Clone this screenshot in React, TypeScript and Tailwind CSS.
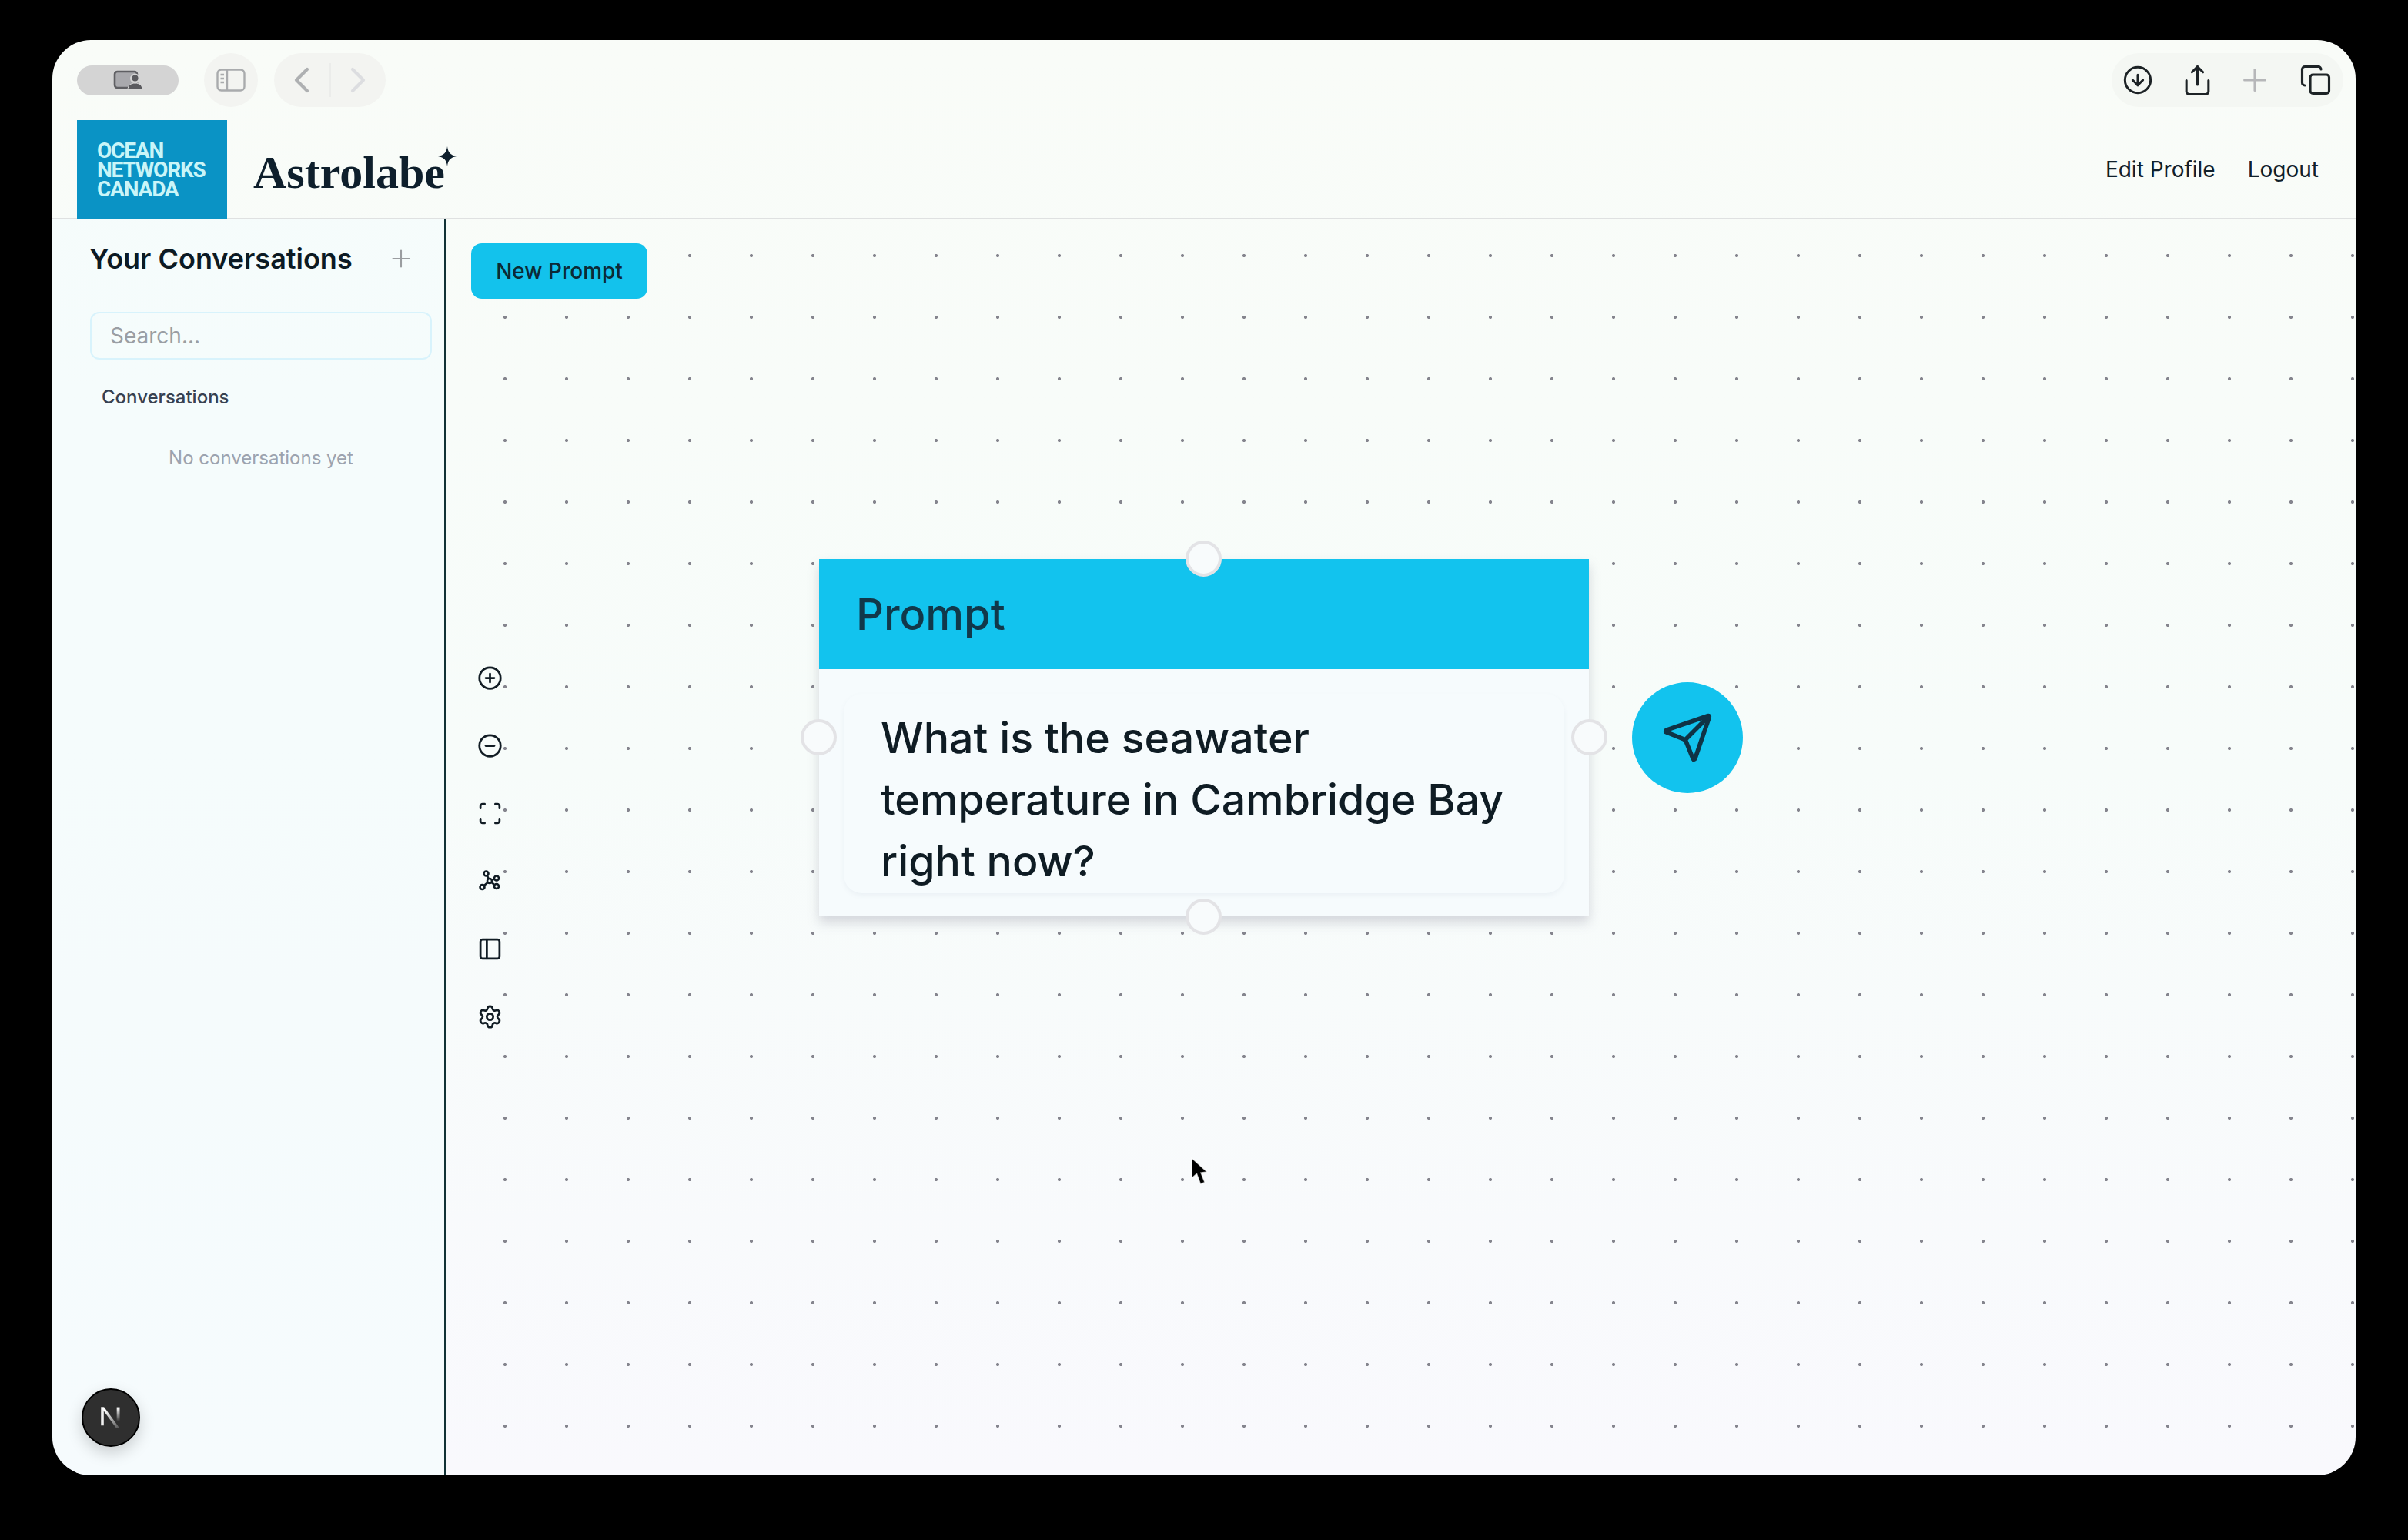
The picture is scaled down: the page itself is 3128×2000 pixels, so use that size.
import { CirclePlus, CircleMinus, Scan, PanelLeft, Settings, Send, Plus, ChevronLeft, ChevronRight, Share, Copy, CircleArrowDown } from "lucide-react";

function NetworkIcon() {
  return (
    <svg width="32" height="32" viewBox="0 0 32 32" fill="none" stroke="#111c24" strokeWidth="2.6">
      <circle cx="16" cy="16" r="3" />
      <circle cx="11.5" cy="6.5" r="3" />
      <circle cx="25" cy="12.5" r="3" />
      <circle cx="25" cy="23" r="3" />
      <circle cx="6.5" cy="24" r="3" />
      <path d="M13 9.2L14.6 13.4M22.2 13.4L18.9 15M22.6 21.4L18.5 17.8M8.8 22L13.7 18" />
    </svg>
  );
}

function ProfileTabIcon() {
  return (
    <svg width="38" height="26" viewBox="0 0 38 26" fill="none">
      <rect x="2" y="2" width="29" height="21" rx="3.5" fill="#a9a9ad" stroke="#5f5f63" strokeWidth="2.6" />
      <circle cx="28.500" cy="11" r="6.500" fill="#d4d4d4" />
      <circle cx="28.500" cy="10.500" r="4" fill="#5b5b5f" />
      <path d="M19 25.500c0-5.500 4-8.500 9.500-8.500s9.500 3 9.500 8.500z" fill="#5b5b5f" stroke="#d4d4d4" strokeWidth="1" />
    </svg>
  );
}

function SidebarIcon() {
  return (
    <svg width="38" height="30" viewBox="0 0 38 30" fill="none" stroke="#a9abad" strokeWidth="2.4">
      <rect x="1.5" y="1.5" width="35" height="27" rx="5" />
      <path d="M14 1.5v27" />
      <path d="M5.5 8h4.500M5.5 13h4.500M5.5 18h4.500" />
    </svg>
  );
}

function StarIcon() {
  return (
    <svg width="24" height="26" viewBox="0 0 24 26" className="absolute left-[240px] top-[-2px]">
      <path d="M12 0C13 8 16 11.500 24 13 16 14.500 13 18 12 26 11 18 8 14.500 0 13 8 11.500 11 8 12 0z" fill="#0e1f2c" />
    </svg>
  );
}

function NextLogo() {
  return (
    <svg width="46" height="46" viewBox="0 0 36 36" fill="none">
      <defs>
        <linearGradient id="nA" x1="14" y1="10" x2="28" y2="30" gradientUnits="userSpaceOnUse">
          <stop offset="0" stopColor="#ffffff" />
          <stop offset="1" stopColor="#ffffff" stopOpacity="0.1" />
        </linearGradient>
        <linearGradient id="nB" x1="26" y1="8" x2="26" y2="22" gradientUnits="userSpaceOnUse">
          <stop offset="0" stopColor="#ffffff" />
          <stop offset="1" stopColor="#ffffff" stopOpacity="0" />
        </linearGradient>
      </defs>
      <path d="M8 7.500h2.800v18.500H8z" fill="#f0f0f0" />
      <path d="M8 7.500h3.200L27 29h-3.300z" fill="url(#nA)" />
      <rect x="24" y="7.500" width="3" height="14" fill="url(#nB)" />
    </svg>
  );
}

function Cursor() {
  return (
    <svg width="24" height="40" viewBox="0 0 24 40" className="absolute left-[966px] top-[1218px]">
      <path d="M2 1L2 27 8.500 21.500 13.500 35 19 32.500 14 20 22 19z" fill="#000" stroke="#ffffff" strokeOpacity="0.7" strokeWidth="1.500" />
    </svg>
  );
}

function Handle({ className }: { className: string }) {
  return <div className={"absolute h-[47px] w-[47px] rounded-full border-[4px] border-[#e3e3e6] bg-[#f8fbfc] " + className} />;
}

const tools = [
  <CirclePlus key="a" size={33} strokeWidth={2} color="#111c24" />,
  <CircleMinus key="b" size={33} strokeWidth={2} color="#111c24" />,
  <Scan key="c" size={33} strokeWidth={2} color="#111c24" />,
  <NetworkIcon key="d" />,
  <PanelLeft key="e" size={33} strokeWidth={2} color="#111c24" />,
  <Settings key="f" size={33} strokeWidth={2} color="#111c24" />,
];

export default function App() {
  return (
    <div className="h-[2000px] w-[3128px] overflow-hidden bg-black pl-[68px] pt-[52px] font-[Inter,sans-serif]">
      <div className="relative flex h-[1864px] w-[2992px] flex-col overflow-hidden rounded-[50px] bg-gradient-to-b from-[#f9fcf8] via-[#f7fcfa] to-[#f9f9fd]">
        {/* browser toolbar */}
        <div className="flex h-[104px] shrink-0 items-center pl-[32px] pr-[16px]">
          <div className="flex h-[39px] w-[132px] items-center justify-center rounded-full bg-[#d4d4d4]">
            <ProfileTabIcon />
          </div>
          <div className="ml-[33px] flex h-[70px] w-[70px] items-center justify-center rounded-full bg-[#f3f4f1]">
            <SidebarIcon />
          </div>
          <div className="ml-[21px] flex h-[70px] w-[145px] items-center justify-between rounded-full bg-[#f3f4f1] px-[8px]">
            <ChevronLeft size={56} strokeWidth={1.8} color="#aeb0b2" />
            <div className="h-[44px] w-[2px] bg-[#ebecea]" />
            <ChevronRight size={56} strokeWidth={1.8} color="#dcdde0" />
          </div>
          <div className="ml-auto flex h-[70px] w-[301px] items-center rounded-full bg-[#f4f7f3] pl-[14px]">
            <CircleArrowDown size={40} strokeWidth={1.8} color="#1d2326" />
            <Share size={43} strokeWidth={1.7} color="#1d2326" className="ml-[36px]" />
            <Plus size={46} strokeWidth={1.6} color="#b6b7b9" className="ml-[30px]" />
            <Copy size={42} strokeWidth={1.8} color="#1d2326" className="ml-[35px]" />
          </div>
        </div>

        {/* app header */}
        <header className="flex h-[129px] shrink-0 items-stretch border-b-2 border-[#dfe1e1] pl-[32px] pr-[48px]">
          <div className="flex h-[128px] w-[195px] items-center bg-[#0a93c5] pl-[26px] font-['Roboto',sans-serif] text-[28px] font-bold leading-[25px] tracking-[-1.2px] text-[#c9f5f8]">
            <p>OCEAN<br />NETWORKS<br />CANADA</p>
          </div>
          <div className="relative ml-[34px] mt-[8px] self-center font-['Liberation_Serif',serif] text-[60px] font-bold leading-[64px] text-[#0e1f2c]">
            Astrolabe
            <StarIcon />
          </div>
          <nav className="ml-auto flex items-center gap-[42px] text-[28px] text-[#10202b]">
            <span>Edit Profile</span>
            <span>Logout</span>
          </nav>
        </header>

        <div className="flex min-h-0 flex-1">
          {/* sidebar */}
          <aside className="flex w-[512px] shrink-0 flex-col border-r-[3px] border-[#123236] bg-[#f4fbfe]/60 pl-[49px] pr-[16px]">
            <div className="mt-[26px] flex h-[50px] items-center justify-between pr-[22px]">
              <h2 className="ml-[-1px] text-[36px] font-semibold leading-[50px] text-[#0c1a24]">Your Conversations</h2>
              <Plus size={36} strokeWidth={1.4} color="#9a9da0" />
            </div>
            <div className="mt-[44px] flex h-[62px] items-center rounded-[12px] border-2 border-[#d8f3fc] pl-[24px] text-[28px] text-[#9a9ea4]">
              Search...
            </div>
            <div className="mt-[33px] pl-[15px] text-[24px] font-medium leading-[32px] text-[#374151]">Conversations</div>
            <div className="mt-[47px] text-center text-[24px] leading-[32px] text-[#9ca3af]">No conversations yet</div>
          </aside>

          {/* canvas */}
          <main className="relative min-w-0 flex-1 bg-[radial-gradient(circle,#85858e_1.7px,transparent_2.4px)] bg-[size:80px_80px] bg-[position:36px_7px]">
            <button className="ml-[32px] mt-[31px] flex h-[72px] w-[229px] items-center justify-center rounded-[14px] bg-[#13c2ec] text-[28px] font-medium text-[#0b2a36]">
              New Prompt
            </button>

            <div className="absolute left-[23px] top-[551px] flex flex-col items-center">
              {tools.map((t) => (
                <div key={t.key} className="flex h-[88px] w-[66px] items-center justify-center">{t}</div>
              ))}
            </div>

            {/* node */}
            <div className="absolute left-[484px] top-[441px] h-[464px] w-[1000px] bg-[#f6fbfd] shadow-[0_8px_14px_rgba(120,120,140,0.28)]">
              <div className="flex h-[143px] items-center bg-[#12c3ee] pl-[48px] text-[56px] font-medium text-[#11384a]">Prompt</div>
              <div className="mx-[32px] mt-[32px] h-[259px] rounded-[24px] bg-[#f6fbfd] px-[48px] pt-[17px] text-[55.500px] font-medium leading-[80px] text-[#0f1c24] shadow-[0_3px_6px_rgba(120,130,150,0.08)]">
                What is the seawater temperature in Cambridge Bay right now?
              </div>
              <Handle className="left-[476px] top-[-24px] bg-[#f6f6f6]" />
              <Handle className="left-[476px] bottom-[-24px] bg-[#f6f6f6]" />
              <Handle className="left-[-24px] top-[208px]" />
              <Handle className="right-[-24px] top-[208px]" />
              <div className="absolute left-[1056px] top-[160px] flex h-[144px] w-[144px] items-center justify-center rounded-full bg-[#12c3ee]">
                <Send size={68} strokeWidth={2} color="#0f3346" />
              </div>
            </div>

            <Cursor />
          </main>
        </div>

        {/* dev badge */}
        <div className="absolute bottom-[37px] left-[38px] flex h-[76px] w-[76px] items-center justify-center rounded-full border-2 border-black bg-[#2f2f2f] shadow-[0_8px_20px_rgba(0,0,0,0.18)]">
          <NextLogo />
        </div>
      </div>
    </div>
  );
}
